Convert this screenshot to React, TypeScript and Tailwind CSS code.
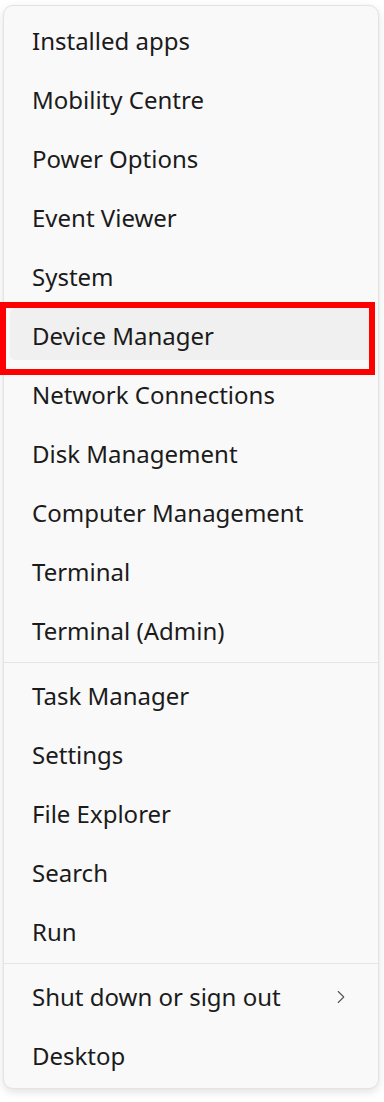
import { ChevronRight } from 'lucide-react';

const groups: string[][] = [
  [
    'Installed apps',
    'Mobility Centre',
    'Power Options',
    'Event Viewer',
    'System',
    'Device Manager',
    'Network Connections',
    'Disk Management',
    'Computer Management',
    'Terminal',
    'Terminal (Admin)',
  ],
  ['Task Manager', 'Settings', 'File Explorer', 'Search', 'Run'],
  ['Shut down or sign out', 'Desktop'],
];

function MenuRow({ label, active }: { label: string; active?: boolean }) {
  return (
    <div className="relative h-[59px] flex items-center pl-[28px] pr-[26px] pb-[3px]">
      {active && (
        <div className="absolute top-0 bottom-[7px] left-[6px] right-[6px] rounded-[5px] bg-[#f0f0f0]" />
      )}
      <span className="relative flex-1 text-[24px] text-[#1b1b1b] leading-none">{label}</span>
      {label === 'Shut down or sign out' && (
        <ChevronRight className="relative w-[22px] h-[22px] text-[#555]" strokeWidth={1.2} />
      )}
    </div>
  );
}

export default function App() {
  return (
    <div
      className="relative w-[384px] h-[1102px] bg-white pt-[5px] pl-[3px]"
      style={{ fontFamily: '"Noto Sans", "Open Sans", sans-serif' }}
    >
      <div className="w-[376px] rounded-[10px] border border-[#e3e3e3] bg-[#f9f9f9] pt-[7px] pb-px shadow-[0_3px_8px_rgba(0,0,0,0.12)]">
        {groups.map((items, gi) => (
          <div key={gi}>
            {gi > 0 && <div className="h-px bg-[#e5e5e5] mb-[5px]" />}
            {items.map((label) => (
              <MenuRow key={label} label={label} active={label === 'Device Manager'} />
            ))}
          </div>
        ))}
      </div>

      {/* red callout around Device Manager */}
      <div className="absolute left-0 top-[302px] w-[375px] h-[73px] border-[6px] border-[#ff0000]" />
    </div>
  );
}
